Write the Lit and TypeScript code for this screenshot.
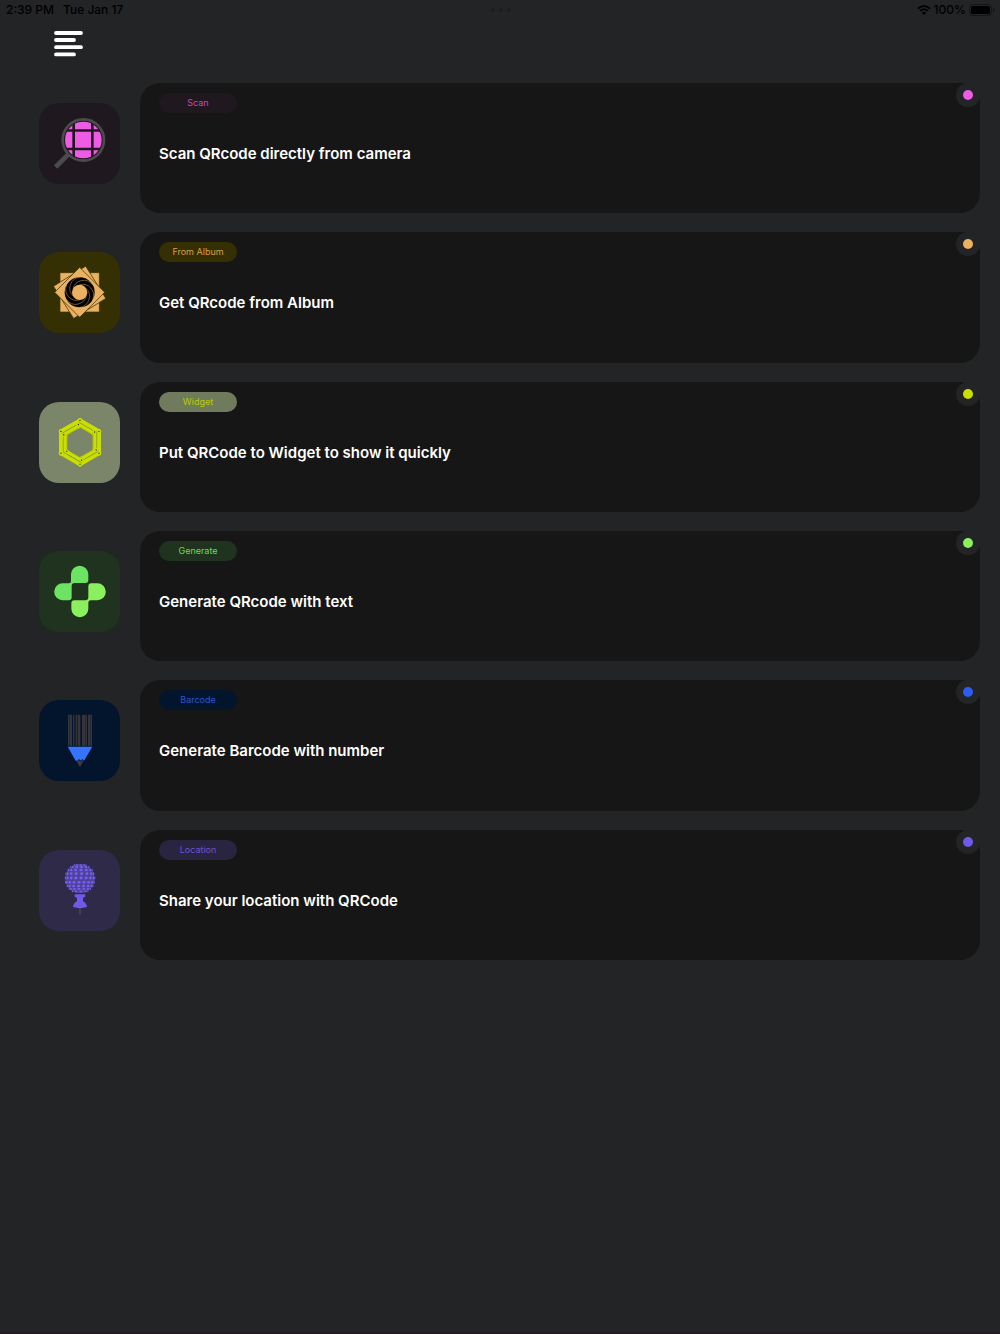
import { LitElement, html, svg, css } from "lit";
import { customElement } from "lit/decorators.js";
import { styleMap } from "lit/directives/style-map.js";

const scanIcon = svg`
  <svg viewBox="27 39 243 243" aria-hidden="true">
    <defs><clipPath id="lens"><circle cx="160" cy="150" r="55" /></clipPath></defs>
    <path d="M118 190 L77 231" stroke="#4b4b4b" stroke-width="14" />
    <circle cx="160" cy="150" r="62" fill="#20181f" stroke="#4b4b4b" stroke-width="8" />
    <g clip-path="url(#lens)" fill="#ee5ce6">
      <path d="M100 90h27v28h-27zM135 90h48v28h-48zM191 90h30v28h-30z" />
      <path d="M100 125h27v48h-27zM135 125h48v48h-48zM191 125h30v48h-30z" />
      <path d="M100 181h27v28h-27zM135 181h48v28h-48zM191 181h30v28h-30z" />
    </g>
  </svg>`;

const swirl = [0, 60, 120, 180, 240, 300];
const albumIcon = svg`
  <svg viewBox="27 28 243 243" aria-hidden="true">
    <g fill="#ecb160" stroke="#343003" stroke-width="2">
      <path d="M90 90H208V208H90Z" />
      <path d="M92 92H206V206H92Z" transform="rotate(58 149 149)" />
      <path d="M96 96H202V202H96Z" transform="rotate(45 149 149)" />
    </g>
    <circle cx="149" cy="149" r="45" fill="#000" />
    <circle cx="149" cy="149" r="23" fill="#ecb160" />
    <g fill="none" stroke="#ecb160" stroke-width="1.3">
      ${swirl.map(a => svg`<path d="M149 104 A33 33 0 0 0 130 161" transform="rotate(${a} 149 149)" />`)}
    </g>
  </svg>`;

const widgetIcon = svg`
  <svg viewBox="27 29 243 243" aria-hidden="true">
    ${[0, 60, 120, 180, 240, 300].map(a => svg`
      <g transform="rotate(${a} 150 150)" fill="none" stroke-linecap="round">
        <path d="M93 116V184" stroke="#c9df00" stroke-width="12" />
        <path d="M106 128V182" stroke="#c9df00" stroke-width="12" />
        <path d="M99.500 122V184M111 136V172" stroke="#7d8a20" stroke-width="1.2" />
        <path d="M93 117v0M93 183v0M107 129v0M106 181v0" stroke="#222608" stroke-width="4" />
      </g>`)}
  </svg>`;

const generateIcon = svg`
  <svg viewBox="27 29 243 243" aria-hidden="true">
    <path fill="#6ce362" d="M123 99A26 26 0 0 1 175 99V116Q175 125 166 125H134Q125 125 125 134V168Q125 177 116 177H98A25.500 25.500 0 0 1 98 126H117Q123 126 123 120Z" />
    <path fill="#8bf05e" d="M175 135Q175 126 184 126H202A25.500 25.500 0 0 1 202 177H182Q176 177 175 183V202A25.500 25.500 0 0 1 124 202V186Q124 177 133 177H166Q175 177 175 168Z" />
  </svg>`;

const barcodeIcon = svg`
  <svg viewBox="27 31 243 243" aria-hidden="true">
    <path fill="#34353a" d="M114 75h4v93h-4zM119 75h7v93h-7zM129 75h4v93h-4zM137 75h4v93h-4zM143 75h8v93h-8zM156 75h11v93h-11zM168 75h3v93h-3zM174 75h8v93h-8zM183 75h3v93h-3z" />
    <path fill="#3474ff" d="M113 171H187L162 213L157 208L152 213L147 208L142 213H137Z" />
    <path fill="#3b3b3d" d="M140 216L147 211L152 216L157 211L160 215L150 232Z" />
  </svg>`;

// Dots of the golf-ball head: rows bulge in the middle and narrow to the poles.
const ballDots = [-41, -35, -26, -15, -2, 11, 22, 31, 38].flatMap((y, row) => {
  const half = Math.sqrt(45 * 45 - y * y);
  const n = Math.max(5, Math.round(half / 5));
  const ry = 4.4 * Math.sqrt(1 - (y / 47) ** 2);
  return Array.from({ length: n }, (_, i) => {
    const t = ((i + (row % 2 ? 0.3 : 0.7)) / n) * 2 - 1;
    const s = Math.sin((t * Math.PI) / 2);
    return { x: 150 + s * half, y: 115 + y, rx: Math.max(1.5, 4.8 * Math.cos((t * Math.PI) / 2.3)), ry: Math.max(1.8, ry) };
  });
});
const locationIcon = svg`
  <svg viewBox="27 29 243 243" aria-hidden="true">
    <circle cx="150" cy="115" r="44" fill="#7059e8" opacity="0.5" />
    <g fill="#7660f2">${ballDots.map(d => svg`<ellipse cx=${d.x} cy=${d.y} rx=${d.rx} ry=${d.ry} />`)}</g>
    <path d="M150 200V222" stroke="#55535c" stroke-width="3" />
    <path fill="#7059e8" d="M134 162H166V169Q159 171 159 175V183Q170 188 171 200Q150 207 129 200Q130 188 141 183V175Q141 171 134 169Z" />
  </svg>`;

const items = [
  { tag: "Scan", title: "Scan QRcode directly from camera", color: "#ee5ce6", text: "#c24bbc", tile: "#20181f", chip: "#20181f", icon: scanIcon },
  { tag: "From Album", title: "Get QRcode from Album", color: "#ecb160", text: "#d99f45", tile: "#343003", chip: "#343003", icon: albumIcon },
  { tag: "Widget", title: "Put QRCode to Widget to show it quickly", color: "#c9df00", text: "#b9cd00", tile: "#7a856a", chip: "#707b5d", icon: widgetIcon },
  { tag: "Generate", title: "Generate QRcode with text", color: "#8bf05e", text: "#72d957", tile: "#20331f", chip: "#20331f", icon: generateIcon },
  { tag: "Barcode", title: "Generate Barcode with number", color: "#2f5cf0", text: "#2a56d6", tile: "#03152d", chip: "#03152d", icon: barcodeIcon },
  { tag: "Location", title: "Share your location with QRCode", color: "#7059e8", text: "#6a55d8", tile: "#2e2a48", chip: "#29243f", icon: locationIcon },
];

@customElement("app-root")
export class AppRoot extends LitElement {
  static styles = css`
    :host {
      display: flex;
      flex-direction: column;
      min-height: 100vh;
      box-sizing: border-box;
      background: #222426;
      border-bottom: 2px solid #261b22;
      color: #fff;
      font-family: Inter, "Liberation Sans", sans-serif;
    }
    .status {
      display: grid;
      grid-template-columns: 1fr auto 1fr;
      align-items: center;
      height: 20px;
      padding: 0 5px 0 6px;
      color: #000;
      font-size: 12px;
      line-height: 20px;
      font-weight: 500;
    }
    .when { display: flex; gap: 9px; }
    .dots { display: flex; gap: 4px; }
    .dots i { width: 4px; height: 4px; border-radius: 50%; background: #1d1e20; }
    .power { display: flex; gap: 3px; align-items: center; justify-content: flex-end; }
    .power svg { display: block; }
    .toolbar { display: flex; padding: 6px 49px 0; }
    .menu {
      display: flex;
      padding: 5px;
      border: 0;
      background: none;
      cursor: pointer;
    }
    .list {
      display: grid;
      grid-auto-rows: 1fr;
      gap: 19px;
      min-height: 877px;
      margin: 21px 0 0;
      padding: 0 20px 0 39px;
      list-style: none;
    }
    .row { display: flex; gap: 20px; align-items: stretch; }
    .tile {
      flex: none;
      width: 81px;
      height: 81px;
      margin-top: 20px;
      border-radius: 20px;
      overflow: hidden;
    }
    .tile svg { display: block; width: 100%; height: 100%; }
    .card {
      position: relative;
      flex: 1;
      display: flex;
      flex-direction: column;
      align-items: flex-start;
      gap: 31px;
      padding: 10px 19px;
      border: 0;
      border-radius: 20px;
      background: #161616;
      color: inherit;
      font: inherit;
      text-align: left;
      cursor: pointer;
    }
    .chip {
      width: 78px;
      border-radius: 10px;
      font-size: 9px;
      line-height: 20px;
      text-align: center;
    }
    .title { font-size: 15px; line-height: 20px; font-weight: 600; }
    .badge {
      position: absolute;
      top: 0;
      right: 0;
      display: grid;
      place-items: center;
      width: 24px;
      height: 24px;
      border-radius: 50%;
      background: #222426;
    }
    .badge i { width: 10px; height: 10px; border-radius: 50%; }
  `;

  render() {
    return html`
      <header class="status">
        <div class="when"><span>2:39 PM</span><span>Tue Jan 17</span></div>
        <div class="dots"><i></i><i></i><i></i></div>
        <div class="power">
          <svg width="14" height="10" viewBox="0 0 14 10" aria-hidden="true">
            <g fill="none" stroke="#000" stroke-width="1.9">
              <path d="M1 3.600A8.600 8.600 0 0 1 13 3.600" />
              <path d="M3.200 5.900A5.400 5.400 0 0 1 10.800 5.900" />
            </g>
            <path d="M7 10L4.900 7.700A3 3 0 0 1 9.100 7.700Z" />
          </svg>
          <span>100%</span>
          <svg width="26" height="12" viewBox="0 0 26 12" aria-hidden="true">
            <rect x="0.500" y="0.500" width="22" height="11" rx="3" fill="none" stroke="#131415" />
            <rect x="2" y="2" width="19" height="8" rx="1.500" />
            <path d="M24 4Q25.500 4.500 25.500 6T24 8Z" fill="#131415" />
          </svg>
        </div>
      </header>
      <div class="toolbar">
        <button class="menu" aria-label="Menu">
          <svg width="29" height="26" viewBox="0 0 29 26" aria-hidden="true">
            <path d="M2 2H27M2 9H20M2 16.200H27M2 23.400H20" stroke="#fff" stroke-width="3.800" stroke-linecap="round" />
          </svg>
        </button>
      </div>
      <ul class="list">
        ${items.map(
          (it) => html`
            <li class="row">
              <div class="tile" style=${styleMap({ background: it.tile })}>${it.icon}</div>
              <button class="card">
                <span class="chip" style=${styleMap({ background: it.chip, color: it.text })}>${it.tag}</span>
                <span class="title">${it.title}</span>
                <span class="badge"><i style=${styleMap({ background: it.color })}></i></span>
              </button>
            </li>
          `
        )}
      </ul>
    `;
  }
}
